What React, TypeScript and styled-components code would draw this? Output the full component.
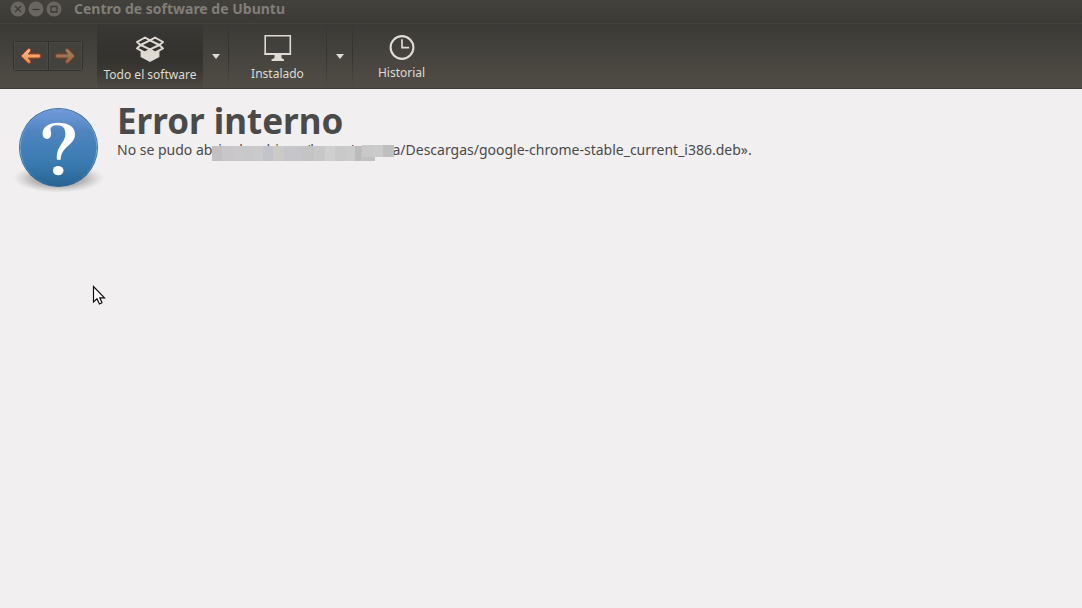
import React from "react";
import styled, { createGlobalStyle } from "styled-components";

const GlobalStyle = createGlobalStyle`
  * { box-sizing: border-box; }
  body { margin: 0; background: #f1eff0; color: #4a4a4a; font-family: "Noto Sans", "Open Sans", sans-serif; }
  button { font: inherit; color: inherit; border: 0; padding: 0; background: none; }
  h1, p { margin: 0; }
  svg { display: block; flex: none; }
`;

const Window = styled.div`
  position: relative;
  min-height: 100vh;
  display: flex;
  flex-direction: column;
`;

const TitleBar = styled.header`
  display: flex;
  align-items: center;
  height: 24px;
  padding: 0 10px 6px;
  background: linear-gradient(#42413c, #3b3a36);
  border-bottom: 1px solid #45433e;
`;

const WindowButtons = styled.div`
  display: flex;
  gap: 2px;
  margin-right: 12px;
`;

const WindowButton = styled.button`
  width: 16px;
  height: 16px;
`;

const WindowTitle = styled.div`
  color: #817e77;
  font-size: 14px;
  font-weight: 700;
  line-height: 18px;
  white-space: nowrap;
`;

const Toolbar = styled.nav`
  display: flex;
  height: 65px;
  padding-left: 13px;
  background: linear-gradient(#3b3a36, #504d45);
  border-bottom: 1px solid #3f3d37;
  color: #dfdbd2;
`;

const History = styled.div`
  display: flex;
  align-self: center;
  width: 70px;
  height: 30px;
  margin-right: 14px;
  border: 1px solid #32312d;
  border-radius: 3px;
  background: #44423d;
`;

const HistoryButton = styled.button<{ $dim?: boolean }>`
  flex: 1;
  display: grid;
  place-items: center;
  box-shadow: inset 0 0 0 1px #4b4943;
  & + & { border-left: 1px solid #32312d; }
  svg { opacity: ${(p) => (p.$dim ? 0.5 : 1)}; }
`;

const Section = styled.button<{ $width: number; $active?: boolean }>`
  display: flex;
  flex-direction: column;
  align-items: center;
  justify-content: center;
  gap: 4px;
  width: ${(p) => p.$width}px;
  padding-top: 1px;
  font-size: 12px;
  line-height: 18px;
  white-space: nowrap;
  background: ${(p) => (p.$active ? "linear-gradient(#393834, #33322e 50%, #3a3934 75%, #4d4a43)" : "none")};
`;

const MenuButton = styled.button<{ $divided?: boolean }>`
  display: grid;
  place-items: center;
  width: ${(p) => (p.$divided ? 27 : 26)}px;
  border: solid;
  border-width: 0 1px 0 ${(p) => (p.$divided ? 1 : 0)}px;
  border-image: linear-gradient(#3b3a36, #34332f 50%, #504d45) 1;
`;

const Content = styled.main`
  display: flex;
  gap: 13px;
  padding: 12px 14px;
`;

const Heading = styled.h1`
  font-size: 35px;
  font-weight: 700;
  line-height: 40px;
`;

const Message = styled.p`
  display: flex;
  font-size: 14px;
  line-height: 18px;
  white-space: nowrap;
`;

const Redacted = styled.span`
  position: relative;
  width: 180px;
`;

const Mosaic = styled.svg`
  position: absolute;
  left: 0;
  top: 4px;
`;

const Pointer = styled.svg`
  position: absolute;
  left: 92px;
  top: 285px;
  pointer-events: none;
`;

const blocks: [number, number, number, number, string][] = [
  [0, 1, 10, 15, "#c2c0c3"], [10, 1, 11, 15, "#c8c6c9"], [21, 1, 9, 15, "#cac8ca"],
  [30, 1, 11, 15, "#c8c7ca"], [41, 1, 10, 15, "#cac9cb"], [51, 1, 10, 15, "#c3c3cb"],
  [61, 1, 11, 15, "#cbcac9"], [72, 1, 17, 15, "#c6c5ca"], [89, 1, 13, 15, "#c4c4c4"],
  [102, 1, 11, 15, "#c8c8c8"], [113, 1, 10, 15, "#cfcfcf"], [123, 1, 10, 15, "#c9c9ca"],
  [133, 1, 10, 15, "#cccbcb"], [143, 1, 6, 15, "#bbbbbc"], [149, 1, 14, 15, "#c1c0c2"],
  [150, 0, 11, 12, "#c9c9ca"], [161, 0, 10, 12, "#cccbcc"], [171, 0, 11, 12, "#bfbfc0"],
];

const NavArrow = ({ forward }: { forward?: boolean }) => (
  <svg width="22" height="18" viewBox="0 0 22 18" aria-hidden="true">
    <defs>
      <linearGradient id="arrow" x1="0" y1="0" x2="0" y2="1">
        <stop offset="0" stopColor="#fbc294" />
        <stop offset="1" stopColor="#f08a4a" />
      </linearGradient>
    </defs>
    <path
      transform={forward ? "translate(22 0) scale(-1 1)" : undefined}
      d="M1 9 8 1.8Q10 .8 10.6 3L10 5 8.2 7H19Q20.5 7 20.5 9T19 11H8.2L10 13l.6 2Q10 17.2 8 16.2Z"
      fill="url(#arrow)" stroke="#b8431b" strokeWidth="1" strokeLinejoin="round"
    />
  </svg>
);

const DownArrow = () => (
  <svg width="8" height="5" viewBox="0 0 8 5" aria-hidden="true">
    <path d="M0 0h8L4 5Z" fill="#dfdbd2" />
  </svg>
);

const BoxIcon = () => (
  <svg width="30" height="33" viewBox="0 0 30 33" aria-hidden="true">
    <g fill="none" stroke="#dfdbd2" strokeWidth="2" strokeLinejoin="round">
      <path d="M10 8.5 15 11.4 20 8.5 28 13 24.4 16 28 19.4 20 23.6 15 20.4 10 23.6 2 19.4 5.6 16 2 13Z" />
      <path d="M5.6 16 15 11.4 24.4 16 15 20.4Z" />
    </g>
    <path d="M5.600 21.800 10 24.200 15 21.200 20 24.200 24.400 21.800V28L15 33 5.600 28Z" fill="#dfdbd2" />
  </svg>
);

const MonitorIcon = () => (
  <svg width="28" height="31" viewBox="0 0 28 31" aria-hidden="true">
    <path d="M1.2 5.8H26.3V23.8H1.2Z" fill="none" stroke="#dfdbd2" strokeWidth="1.6" />
    <path d="M.4 23H27.1V25H.4ZM10.5 25H17.5V28L20 29.5V31H7.5V29.5L10.5 28Z" fill="#dfdbd2" />
  </svg>
);

const ClockIcon = () => (
  <svg width="26" height="29" viewBox="0 0 26 29" aria-hidden="true">
    <g fill="none" stroke="#dfdbd2">
      <circle cx="13" cy="16.5" r="11.4" strokeWidth="2.1" />
      <path d="M13 8.3V16.7H20.2" strokeWidth="1.7" />
    </g>
  </svg>
);

const QuestionIcon = () => (
  <svg width="90" height="96" viewBox="42 33 270 288" role="img" aria-label="Pregunta">
    <defs>
      <linearGradient id="ball" x1="0" y1="0" x2="0" y2="1">
        <stop offset="0" stopColor="#739bdc" />
        <stop offset=".3" stopColor="#4f84bf" />
        <stop offset=".7" stopColor="#3a7bb0" />
        <stop offset="1" stopColor="#286493" />
      </linearGradient>
      <linearGradient id="rim" x1="0" y1="0" x2="0" y2="1">
        <stop offset="0" stopColor="#6d9bd3" />
        <stop offset=".6" stopColor="#70a7d2" />
        <stop offset="1" stopColor="#2b6596" />
      </linearGradient>
      <radialGradient id="shade">
        <stop offset="0" stopColor="#555" stopOpacity=".8" />
        <stop offset=".6" stopColor="#777" stopOpacity=".45" />
        <stop offset="1" stopColor="#999" stopOpacity="0" />
      </radialGradient>
    </defs>
    <ellipse cx="176" cy="265" rx="136" ry="43" fill="url(#shade)" />
    <circle cx="175.500" cy="172.500" r="118.500" fill="#2c659b" />
    <circle cx="175.500" cy="172.500" r="115" fill="url(#ball)" stroke="url(#rim)" strokeWidth="3" />
    <path
      d="M128 133C126 110 148 98 175 98C205 98 225 110 225 133C225 167 184 167 182 209H171C167 167 196 160 196 131C196 115 188 106 172 106C158 106 149 112 152 122C156 132 152 147 141 147C133 147 128 141 128 133Z"
      fill="#fff"
    />
    <ellipse cx="174.500" cy="242" rx="16" ry="14" fill="#fff" />
  </svg>
);

const controls = [
  { label: "Cerrar", d: "M5 5 11 11M11 5 5 11" },
  { label: "Minimizar", d: "M4.500 8.500H11.500" },
  { label: "Maximizar", d: "M5 5.500H11V11H5Z" },
];

export default function App() {
  return (
    <Window>
      <GlobalStyle />
      <TitleBar>
        <WindowButtons>
          {controls.map((c) => (
            <WindowButton key={c.label} aria-label={c.label}>
              <svg width="16" height="16" viewBox="0 0 16 16" aria-hidden="true">
                <circle cx="8" cy="8" r="7.500" fill="#68665f" />
                <path d={c.d} fill="none" stroke="#3b3a36" strokeWidth="1.3" />
              </svg>
            </WindowButton>
          ))}
        </WindowButtons>
        <WindowTitle>Centro de software de Ubuntu</WindowTitle>
      </TitleBar>
      <Toolbar>
        <History>
          <HistoryButton aria-label="Atrás"><NavArrow /></HistoryButton>
          <HistoryButton aria-label="Adelante" $dim><NavArrow forward /></HistoryButton>
        </History>
        <Section $width={106} $active><BoxIcon />Todo el software</Section>
        <MenuButton aria-label="Más software"><DownArrow /></MenuButton>
        <Section $width={97}><MonitorIcon />Instalado</Section>
        <MenuButton aria-label="Más instalados" $divided><DownArrow /></MenuButton>
        <Section $width={97}><ClockIcon />Historial</Section>
      </Toolbar>
      <Content>
        <QuestionIcon />
        <div>
          <Heading>Error interno</Heading>
          <Message>
            <span>No se pudo ab</span>
            <Redacted>
              rir el archivo «/home/
              <Mosaic width="182" height="16" viewBox="0 0 182 16" shapeRendering="crispEdges" aria-hidden="true">
                {blocks.map(([x, y, w, h, fill], i) => (
                  <rect key={i} x={x} y={y} width={w} height={h} fill={fill} />
                ))}
              </Mosaic>
            </Redacted>
            <span>a/Descargas/google-chrome-stable_current_i386.deb».</span>
          </Message>
        </div>
      </Content>
      <Pointer width="15" height="21" viewBox="0 0 15 21" aria-hidden="true">
        <path d="M1.500 1.500V17L5 13.800 7.400 19 10 17.800 7.800 12.800H12.500Z" fill="#fff" stroke="#111" strokeWidth="1.200" />
      </Pointer>
    </Window>
  );
}
